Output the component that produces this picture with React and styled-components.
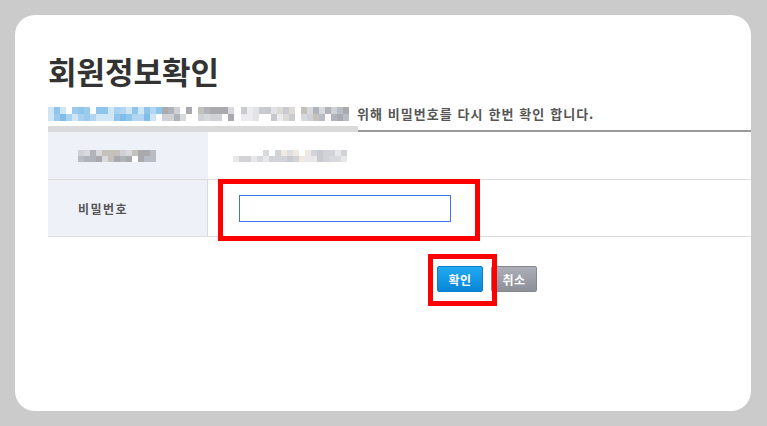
import React from 'react';
import styled, { createGlobalStyle } from 'styled-components';

const GlobalStyle = createGlobalStyle`
  html, body {
    margin: 0;
    padding: 0;
    background: #cbcbcb;
  }
  body {
    font-family: 'Noto Sans CJK KR', 'Noto Sans', sans-serif;
    color: #333;
  }
`;

const palettes = {
  blue: ['#a9d2f0', '#8ec5ec', '#bcdcf4', '#cfe6f7', '#9ccbee', '#80bde9', '#b2d6f2'],
  grey: ['#b8bcc4', '#a9a9ae', '#cfd1d6', '#c4c0bc', '#b0b3ba', '#d8d9dc'],
  light: ['#e2e3e6', '#d5d6da', '#ececee', '#cacbd0', '#dcdad6', '#c7c9ce'],
  faint: ['#dfe0e4', '#d2d3d8', '#e8e8eb', '#c9cad0', '#efe9e2', '#d8d9dd'],
};

// tiny seeded random so the mosaic is stable between renders
const makeRandom = (seed) => {
  let s = seed;
  return () => {
    s = (s * 9301 + 49297) % 233280;
    return s / 233280;
  };
};

const Page = styled.div`
  padding: 15px 16px 15px 15px;
  height: 426px;
  box-sizing: border-box;
`;

const Card = styled.div`
  height: 396px;
  background: #fff;
  border-radius: 20px;
  overflow: hidden;
  padding: 38px 0 0 33px;
  box-sizing: border-box;
`;

const Title = styled.h1`
  margin: 0;
  font-size: 31px;
  line-height: 36px;
  font-weight: 700;
  color: #333;
  letter-spacing: 0;
`;

const Notice = styled.div`
  display: flex;
  align-items: center;
  margin-top: 17px;
  height: 15px;
`;

const NoticeText = styled.span`
  margin-left: 8px;
  font-size: 13px;
  line-height: 15px;
  font-weight: 700;
  color: #555;
  letter-spacing: 1px;
  word-spacing: 1px;
  white-space: nowrap;
`;

const MosaicGrid = styled.div`
  display: grid;
  grid-template-columns: repeat(${(p) => p.$cols}, 6px);
  grid-auto-rows: ${(p) => p.$row || 6}px;
  flex-shrink: 0;
  margin-right: ${(p) => p.$gap || 0}px;
`;

const MosaicCell = styled.div`
  background: ${(p) => p.$c};
`;

const Mosaic = ({ cols, rows = 2, rowHeight, palette, seed, gap, blueCols }) => {
  const rand = makeRandom(seed);
  const cells = [];
  for (let r = 0; r < rows; r += 1) {
    for (let c = 0; c < cols; c += 1) {
      const pal = blueCols && c < blueCols ? palettes.blue : palettes[palette];
      const skip = rand() < 0.08;
      cells.push(skip ? '#fff' : pal[Math.floor(rand() * pal.length)]);
    }
  }
  return (
    <MosaicGrid $cols={cols} $gap={gap} $row={rowHeight}>
      {cells.map((c, i) => (
        <MosaicCell key={i} $c={c} />
      ))}
    </MosaicGrid>
  );
};

const Rule = styled.div`
  display: flex;
  align-items: flex-end;
  margin-top: 5px;
  height: 6px;
`;

const RuleFade = styled.div`
  width: 310px;
  height: 6px;
  background: #dadada;
`;

const RuleLine = styled.div`
  flex: 1;
  height: 2px;
  background: #999;
`;

const Table = styled.div`
  display: flex;
  flex-direction: column;
`;

const Row = styled.div`
  display: flex;
  height: ${(p) => p.$h}px;
  border-bottom: 1px solid #dcdcdc;
`;

const Label = styled.div`
  width: 160px;
  flex-shrink: 0;
  background: #eef1f8;
  border-right: 1px solid ${(p) => (p.$ruled ? '#dcdcdc' : '#eef1f8')};
  display: flex;
  align-items: center;
  padding-left: 30px;
  box-sizing: border-box;
  font-size: 12px;
  font-weight: 700;
  color: #555;
  letter-spacing: 1.5px;
`;

const Value = styled.div`
  flex: 1;
  display: flex;
  align-items: center;
  padding-left: ${(p) => p.$pad}px;
`;

const Annotated = styled.div`
  position: relative;
  display: inline-flex;
`;

const Highlight = styled.div`
  position: absolute;
  left: ${(p) => p.$l}px;
  top: ${(p) => p.$t}px;
  width: ${(p) => p.$w}px;
  height: ${(p) => p.$h}px;
  border: 5px solid #ff0000;
  box-sizing: border-box;
  pointer-events: none;
`;

const PasswordInput = styled.input`
  width: 212px;
  height: 27px;
  box-sizing: border-box;
  border: 1px solid #3a74f0;
  outline: none;
  padding: 0 6px;
  font-size: 12px;
`;

const Actions = styled.div`
  display: flex;
  gap: 8px;
  margin-top: 29px;
  padding-left: 389px;
`;

const Button = styled.button`
  width: 46px;
  height: 26px;
  padding: 0;
  border-radius: 2px;
  font-family: inherit;
  font-size: 12px;
  font-weight: 700;
  color: #fff;
  letter-spacing: 0.5px;
  cursor: pointer;
  border: 1px solid ${(p) => (p.$primary ? '#0b80cf' : '#85878f')};
  background: ${(p) =>
    p.$primary
      ? 'linear-gradient(#22aaf1, #0785d7)'
      : 'linear-gradient(#acaeb8, #8c8e98)'};
`;

const App = () => (
  <>
    <GlobalStyle />
    <Page>
      <Card>
        <Title>회원정보확인</Title>
        <Notice>
          <Mosaic cols={24} blueCols={19} rowHeight={7} palette="grey" seed={7} gap={6} />
          <Mosaic cols={6} rowHeight={7} palette="grey" seed={19} gap={7} />
          <Mosaic cols={9} rowHeight={7} palette="light" seed={31} gap={6} />
          <Mosaic cols={8} rowHeight={7} palette="grey" seed={43} />
          <NoticeText>위해 비밀번호를 다시 한번 확인 합니다.</NoticeText>
        </Notice>
        <Rule>
          <RuleFade />
          <RuleLine />
        </Rule>
        <Table>
          <Row $h={47}>
            <Label>
              <Mosaic cols={13} palette="grey" seed={57} />
            </Label>
            <Value $pad={25}>
              <Mosaic cols={19} palette="faint" seed={71} />
            </Value>
          </Row>
          <Row $h={56}>
            <Label $ruled>비밀번호</Label>
            <Value $pad={31}>
              <Annotated>
                <PasswordInput type="password" />
                <Highlight $l={-21} $t={-16} $w={262} $h={62} />
              </Annotated>
            </Value>
          </Row>
        </Table>
        <Actions>
          <Annotated>
            <Button $primary>확인</Button>
            <Highlight $l={-9} $t={-12} $w={69} $h={52} />
          </Annotated>
          <Button>취소</Button>
        </Actions>
      </Card>
    </Page>
  </>
);

export default App;
